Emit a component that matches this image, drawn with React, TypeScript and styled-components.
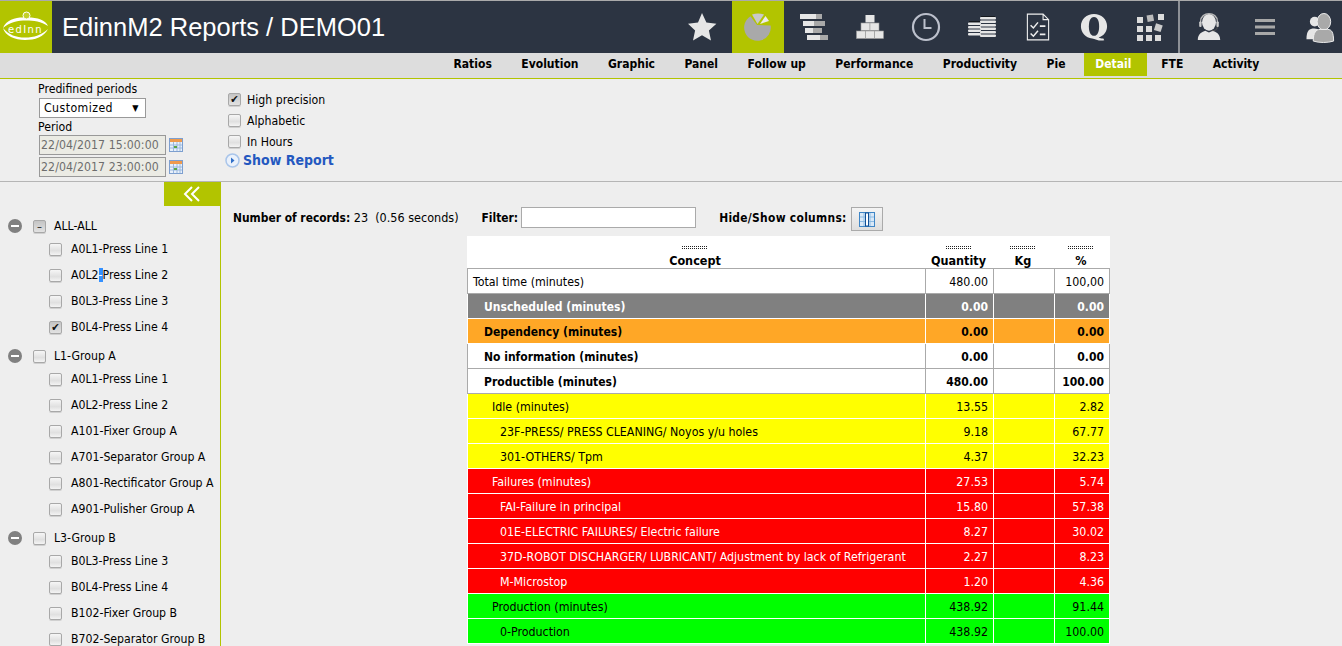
import React from 'react'
import styled, { createGlobalStyle } from 'styled-components'

const GlobalStyle = createGlobalStyle`
  html, body {
    margin: 0;
    padding: 0;
    height: 646px;
    overflow: hidden;
    background: #eeeeee;
    font-family: 'DejaVu Sans Condensed', 'DejaVu Sans', sans-serif;
    font-size: 12.2px;
    color: #000;
  }
  * { box-sizing: border-box; }
`

const Page = styled.div`
  width: 1342px;
  height: 646px;
  overflow: hidden;
  display: flex;
  flex-direction: column;
`

/* header */
const Header = styled.div`
  height: 53px;
  flex: none;
  display: flex;
  align-items: stretch;
  background: #2c3442;
  border-top: 1px solid #aaaaaa;
`
const Logo = styled.div`
  width: 52px;
  background: #b2c400;
  display: flex;
  align-items: center;
  justify-content: center;
`
const Title = styled.h1`
  flex: 1;
  margin: 0;
  padding: 0 0 0 10px;
  align-self: center;
  font-family: 'Liberation Sans', Arial, sans-serif;
  font-weight: 400;
  font-size: 25.5px;
  color: #fff;
`
const IconGroup = styled.div`
  display: flex;
  gap: 4px;
  margin-right: 2px;
`
const UserGroup = styled(IconGroup)`
  border-left: 2px solid #8d9096;
  margin-right: -5px;
  padding-left: 3px;
`
const IconButton = styled.div<{ $active?: boolean }>`
  width: 52px;
  display: flex;
  align-items: center;
  justify-content: center;
  background: ${p => (p.$active ? '#b2c400' : 'transparent')};
`

/* tabs */
const TabBar = styled.div`
  height: 26px;
  flex: none;
  display: flex;
  padding-left: 438.75px;
  background: #dddddd;
  border-bottom: 1px solid #b2c400;
`
const Tab = styled.div<{ $active?: boolean }>`
  height: 23px;
  line-height: 23px;
  padding: ${p => (p.$active ? '0 16px 0 11px' : '0 14.75px')};
  margin: ${p => (p.$active ? '0 -1px 0 4px' : '0')};
  font-weight: 700;
  font-size: 12px;
  color: ${p => (p.$active ? '#fff' : '#000')};
  background: ${p => (p.$active ? '#b2c400' : 'transparent')};
`

/* period panel */
const FilterPanel = styled.div`
  height: 103px;
  flex: none;
  display: flex;
  padding: 3px 0 0 38px;
  border-bottom: 1px solid #b5b5b5;
`
const PeriodColumn = styled.div`
  width: 187px;
  display: flex;
  flex-direction: column;
`
const FieldLabel = styled.div`
  height: 15px;
  line-height: 15px;
`
const PeriodSelect = styled.div`
  width: 107px;
  height: 20px;
  margin: 1px 0 2px 1px;
  padding: 0 6px 0 4px;
  display: flex;
  align-items: center;
  justify-content: space-between;
  background: #fff;
  border: 1px solid #999;
  letter-spacing: 0.45px;
`
const SelectArrow = styled.span`
  font-size: 9px;
`
const DateRow = styled.div`
  display: flex;
  align-items: center;
  gap: 3px;
  margin: 0 0 2px 1px;
`
const DateInput = styled.div`
  width: 127px;
  height: 20px;
  line-height: 18px;
  padding-left: 1px;
  background: #ebebe4;
  border: 1px solid #999;
  color: #6d6d6d;
  white-space: nowrap;
  letter-spacing: 0.1px;
`
const OptionColumn = styled.div`
  display: flex;
  flex-direction: column;
  padding-top: 7px;
`
const OptionRow = styled.label`
  height: 21px;
  display: flex;
  align-items: center;
  margin-left: 3px;
  gap: 6px;
`
const ShowReport = styled.div`
  display: flex;
  align-items: center;
  gap: 3px;
  font-weight: 700;
  font-size: 14px;
  color: #2458c0;
`

/* checkboxes */
const Check = styled.span<{ $on?: boolean }>`
  width: 13px;
  height: 13px;
  flex: none;
  display: inline-flex;
  align-items: center;
  justify-content: center;
  border: 1px solid #a8a8a8;
  border-radius: 2px;
  background: ${p =>
    p.$on
      ? 'linear-gradient(#c4c4c4, #e2e2e2)'
      : 'linear-gradient(#f6f6f6, #e0e0e0 60%, #f4f4f4)'};
  box-shadow: 0 1px 0 #d0d0d0;
  color: #111;
  font-size: 11px;
  line-height: 1;
`

/* main */
const Body = styled.div`
  flex: 1;
  min-height: 0;
  display: flex;
`
const Sidebar = styled.aside`
  width: 221px;
  flex: none;
  border-right: 1px solid #b2c400;
  overflow: hidden;
`
const Collapse = styled.div`
  width: 56px;
  height: 24px;
  margin-left: 164px;
  display: flex;
  align-items: center;
  justify-content: center;
  background: #b2c400;
`
const Tree = styled.div`
  padding: 4px 0 0 8px;
`
const TreeLabel = styled.span`
  margin-left: 9px;
  white-space: nowrap;
`
const GroupRow = styled.div`
  height: 20px;
  display: flex;
  align-items: center;
  margin-top: 6px;
  ${TreeLabel} {
    margin-left: 8px;
  }
`
const Collapser = styled.span`
  width: 14px;
  height: 14px;
  margin-right: 11px;
  border-radius: 50%;
  background: #808080;
  display: flex;
  align-items: center;
  justify-content: center;
  &::before {
    content: '';
    width: 8px;
    height: 2px;
    background: #fff;
  }
`
const ChildRow = styled.div`
  height: 26px;
  display: flex;
  align-items: center;
  padding-left: 41px;
`
const Selected = styled.span`
  background: #3390ff;
  color: #fff;
`
const Content = styled.main`
  flex: 1;
  padding: 25px 0 0 12px;
`
const InfoBar = styled.div`
  height: 29px;
  display: flex;
  align-items: flex-start;
`
const InfoText = styled.span<{ $gap?: number; $spacing?: number }>`
  margin-left: ${p => p.$gap ?? 0}px;
  font-size: 12.5px;
  line-height: 22px;
  white-space: pre;
  letter-spacing: ${p => p.$spacing ?? 0}px;
`
const Bold = styled.b`
  font-weight: 700;
  font-size: 11.9px;
`
const FilterInput = styled.div`
  width: 175px;
  height: 21px;
  margin: 0 23px 0 3px;
  background: #fff;
  border: 1px solid #aaa;
`
const ColumnsButton = styled.div`
  width: 32px;
  height: 24px;
  margin-left: 4px;
  display: flex;
  align-items: center;
  justify-content: center;
  border: 1px solid #aaa;
  background: linear-gradient(#f4f4f4, #dedede);
`

/* report table */
const Report = styled.table`
  margin-left: 234px;
  width: 643px;
  table-layout: fixed;
  border-collapse: collapse;
  background: #fff;
`
const HeadCell = styled.th`
  height: 32px;
  padding: 7px 2px 1px 0;
  font-weight: 700;
  font-size: 12.5px;
  line-height: 13px;
  text-align: center;
  vertical-align: bottom;
  &:first-child {
    padding-right: 3px;
  }
`
const Grip = styled.div`
  width: 26px;
  height: 5px;
  margin: 0 auto 4px;
  background:
    repeating-linear-gradient(0deg, #fff 0 1px, transparent 1px 2px),
    repeating-linear-gradient(90deg, #222 0 1px, #fff 1px 2px);
`
const Row = styled.tr<{ $bg: string; $fg: string; $line: string; $bold?: boolean }>`
  height: 25px;
  background: ${p => p.$bg};
  color: ${p => p.$fg};
  font-weight: ${p => (p.$bold ? 700 : 400)};
  font-size: ${p => (p.$bold ? 12 : 12.3)}px;
  td {
    border: 1px solid ${p => p.$line};
  }
`
const Cell = styled.td<{ $indent?: number }>`
  padding: 2px 5px 0 ${p => p.$indent ?? 5}px;
  white-space: nowrap;
  overflow: hidden;
`
const NumCell = styled(Cell)`
  text-align: right;
`

const ic = { bg: '#e6e6e6', mid: '#a9a9a9' }

const StarIcon = () => (
  <svg width="30" height="28" viewBox="0 0 30 28">
    <path d="M15 0l4.400 9.600 10 1.100-7.500 6.700 2.100 10-9-5.100-9 5.100 2.100-10L1 10.700l10-1.100z" fill={ic.bg} />
  </svg>
)
const PieIcon = () => (
  <svg width="30" height="30" viewBox="0 0 30 30">
    <path d="M14 13L27.600 13.500A13.300 13.300 0 1 1 7.500 4.200z" fill={ic.mid} />
    <path d="M14.500 12L9 2.500Q15 .5 21 2.500z" fill="#c9c9c9" />
    <path d="M17 12L22.500 4 26 9z" fill="#ececec" />
  </svg>
)
const RowsIcon = () => (
  <svg width="28" height="26" viewBox="0 0 28 26">
    <rect x="0" y="0" width="16" height="5" fill={ic.bg} />
    <rect x="16" y="0" width="6" height="5" fill={ic.mid} />
    <rect x="3" y="7" width="11" height="5" fill={ic.bg} />
    <rect x="14" y="7" width="11" height="5" fill={ic.mid} />
    <rect x="5" y="14" width="8" height="5" fill={ic.bg} />
    <rect x="13" y="14" width="9" height="5" fill={ic.mid} />
    <rect x="7" y="21" width="13" height="5" fill={ic.bg} />
    <rect x="20" y="21" width="8" height="5" fill={ic.mid} />
  </svg>
)
const BricksIcon = () => (
  <svg width="28" height="24" viewBox="0 0 28 24" fill={ic.bg}>
    <rect x="9.500" y="0" width="9" height="7.500" />
    <g stroke="#9a9a9a" strokeWidth="0.600">
      <rect x="5" y="8" width="9" height="7.500" />
      <rect x="14" y="8" width="9" height="7.500" />
      <rect x="0.500" y="16" width="9" height="7.500" />
      <rect x="9.500" y="16" width="9" height="7.500" />
      <rect x="18.500" y="16" width="9" height="7.500" />
    </g>
  </svg>
)
const ClockIcon = () => (
  <svg width="30" height="30" viewBox="0 0 30 30" fill="none" stroke="#bcc0cc">
    <circle cx="15" cy="15" r="13" strokeWidth="2.200" />
    <path d="M13.500 7v9h7" strokeWidth="2" />
  </svg>
)
const CoinsIcon = () => {
  const left = [6.500, 10, 13.500, 17]
  const right = [1, 4.500, 8, 11.500, 15, 18.500]
  return (
    <svg width="28" height="22" viewBox="0 0 28 22" fill={ic.bg}>
      <rect x="1" y="5" width="11" height="1.500" fill="#14181d" />
      {left.map(y => (
        <rect key={y} x="0" y={y} width="13" height="2.500" rx="1" />
      ))}
      <rect x="13" y="0" width="14" height="1.500" fill="#14181d" />
      {right.map(y => (
        <rect key={y} x="12" y={y} width="16" height="2.500" rx="1" />
      ))}
    </svg>
  )
}
const ChecklistIcon = () => (
  <svg width="24" height="28" viewBox="0 0 26 30" fill="none" stroke="#eee" strokeWidth="1.200">
    <path d="M1.500 1h17l6 6v22h-23zM18.500 1v6h6" />
    <path d="M5 13l3 3 5-6M5 22l3 3 5-6" strokeWidth="1.600" />
    <path d="M15 14h6M15 23h6" strokeWidth="1.800" />
  </svg>
)
const QIcon = () => (
  <svg width="28" height="28" viewBox="0 0 30 32" preserveAspectRatio="none">
    <path d="M15 1C7 1 1 7 1 15c0 7.500 5 13 12 14 3 .300 6 2.500 10 2.500 1 0 2-.200 3-.500l-1-2c-1 .200-3 0-5-1 5.500-2 9-7 9-13C29 7 23 1 15 1z" fill={ic.bg} />
    <path d="M15 4.500c-4 0-5.500 5-5.500 10.500 0 6 1.500 11 5.500 11s5.500-5 5.500-11c0-5.500-1.500-10.500-5.500-10.500z" fill="#2c3442" />
  </svg>
)
const GridIcon = () => (
  <svg width="27" height="27" viewBox="0 0 27 27" fill="#dcdcdc">
    {[
      [0, 3], [21, 0], [0, 12], [9, 12], [0, 21], [9, 21], [18, 21],
    ].map(([x, y]) => (
      <rect key={`${x}-${y}`} x={x} y={y} width="6" height="6" />
    ))}
    <rect x="10" y="1" width="6.500" height="6.500" transform="rotate(-10 13 4)" fill="#bbb" />
    <rect x="18" y="10" width="7" height="7" transform="rotate(18 21 13)" fill="#ccc" />
  </svg>
)
const AgentIcon = () => (
  <svg width="26" height="28" viewBox="0 0 26 30">
    <path d="M1 29c0-7 5-9 8-10l4 2 4-2c3 1 8 3 8 10z" fill={ic.bg} />
    <ellipse cx="13" cy="10" rx="7.500" ry="9" fill={ic.bg} />
    <path d="M4 12V9c0-11 18-11 18 0v3" fill="none" stroke="#bbb" strokeWidth="1.400" />
    <rect x="2.500" y="9" width="2.500" height="6" rx="1" fill="#ccc" />
    <rect x="21" y="9" width="2.500" height="6" rx="1" fill="#ccc" />
    <path d="M22 15c0 3-3 4-6 4" fill="none" stroke="#555" />
  </svg>
)
const MenuIcon = () => (
  <svg width="20" height="16" viewBox="0 0 20 16" fill="#a8a8a8">
    <rect width="20" height="3" y="0" />
    <rect width="20" height="3" y="6.500" />
    <rect width="20" height="3" y="13" />
  </svg>
)
const UsersIcon = () => (
  <svg width="30" height="31" viewBox="0 0 30 32">
    <circle cx="8.500" cy="10" r="5" fill={ic.bg} />
    <path d="M0 28c0-9 3-11 8-11s7 3 7 11z" fill={ic.bg} />
    <ellipse cx="18" cy="10" rx="7" ry="8.500" fill={ic.mid} stroke="#eee" />
    <path d="M7 30c0-9 3-12 7-12h8c4 0 6 3 6 12-6 2-15 2-21 0z" fill={ic.mid} stroke="#eee" />
  </svg>
)
const EdinnLogo = () => (
  <svg width="50" height="32" viewBox="0 0 50 32">
    <path d="M2 17C5 9 14 6.500 22 6.500h5C36 6.500 45 9 47 15 40 10.500 33 9.500 25 9.500S9 11 2 17z" fill="#fff" />
    <path d="M2 17c2 8 12 12 22 12s19-3 23-11c-6 6-14 8.500-23 8.500S8 24 2 17z" fill="#fff" />
    <circle cx="25.500" cy="4.500" r="3.500" fill="#c3d02a" stroke="#fff" />
    <text x="24.500" y="21.500" textAnchor="middle" fontFamily="'DejaVu Sans', sans-serif" fontSize="10" letterSpacing="1.400" fill="#fff">edInn</text>
  </svg>
)
const CalendarIcon = () => (
  <svg width="14" height="14" viewBox="0 0 14 14">
    <rect x="0.500" y="0.500" width="13" height="13" fill="#e8f0fa" stroke="#7d9fcf" />
    <rect x="1" y="1" width="12" height="3" fill="#ee9a4d" />
    <path d="M1 7h12M1 10h12M4.500 4v9M8 4v9M11 4v9" stroke="#9ab8de" />
    <rect x="5" y="8" width="3" height="2" fill="#5aa646" />
  </svg>
)
const PlayIcon = () => (
  <svg width="15" height="15" viewBox="0 0 15 15">
    <circle cx="7.500" cy="7.500" r="6.500" fill="#eaf1fb" stroke="#a9c5ea" strokeWidth="1.500" />
    <path d="M6 4.500l3.500 3-3.500 3z" fill="#2f6fc8" />
  </svg>
)
const ColumnsIcon = () => (
  <svg width="16" height="15" viewBox="0 0 16 15">
    <rect x="0.500" y="0.500" width="15" height="14" fill="#d9e8f7" stroke="#3f86c6" />
    <path d="M1 5h14M1 9.500h14M5 1v13M11 1v13" stroke="#8dbbe3" />
    <rect x="6.500" y="1" width="3" height="13" fill="#fff" stroke="#114f96" />
  </svg>
)
const DoubleChevron = () => (
  <svg width="18" height="16" viewBox="0 0 18 16" fill="none" stroke="#fff" strokeWidth="2">
    <path d="M9 1L2 8l7 7M16 1L9 8l7 7" />
  </svg>
)

type TreeChild = { label: React.ReactNode; on?: boolean }
const tree: { label: string; on?: boolean; children: TreeChild[] }[] = [
  {
    label: 'ALL-ALL',
    on: true,
    children: [
      { label: 'A0L1-Press Line 1' },
      { label: <>A0L2<Selected>-</Selected>Press Line 2</> },
      { label: 'B0L3-Press Line 3' },
      { label: 'B0L4-Press Line 4', on: true },
    ],
  },
  {
    label: 'L1-Group A',
    children: [
      { label: 'A0L1-Press Line 1' },
      { label: 'A0L2-Press Line 2' },
      { label: 'A101-Fixer Group A' },
      { label: 'A701-Separator Group A' },
      { label: 'A801-Rectificator Group A' },
      { label: 'A901-Pulisher Group A' },
    ],
  },
  {
    label: 'L3-Group B',
    children: [
      { label: 'B0L3-Press Line 3' },
      { label: 'B0L4-Press Line 4' },
      { label: 'B102-Fixer Group B' },
      { label: 'B702-Separator Group B' },
    ],
  },
]

const WHITE = { bg: '#fff', fg: '#000', line: '#aaaaaa' }
const YELLOW = { bg: '#ffff00', fg: '#000', line: '#fff' }
const RED = { bg: '#ff0000', fg: '#fff', line: '#fff' }
const GREEN = { bg: '#00ff00', fg: '#000', line: '#fff' }

const rows = [
  { name: 'Total time (minutes)', qty: '480.00', pct: '100,00', indent: 5, ...WHITE },
  { name: 'Unscheduled (minutes)', qty: '0.00', pct: '0.00', indent: 16, bold: true, bg: '#808080', fg: '#fff', line: '#fff' },
  { name: 'Dependency (minutes)', qty: '0.00', pct: '0.00', indent: 16, bold: true, bg: '#ffa726', fg: '#000', line: '#fff' },
  { name: 'No information (minutes)', qty: '0.00', pct: '0.00', indent: 16, bold: true, ...WHITE },
  { name: 'Productible (minutes)', qty: '480.00', pct: '100.00', indent: 16, bold: true, ...WHITE },
  { name: 'Idle (minutes)', qty: '13.55', pct: '2.82', indent: 24, ...YELLOW },
  { name: '23F-PRESS/ PRESS CLEANING/ Noyos y/u holes', qty: '9.18', pct: '67.77', indent: 32, ...YELLOW },
  { name: '301-OTHERS/ Tpm', qty: '4.37', pct: '32.23', indent: 32, ...YELLOW },
  { name: 'Failures (minutes)', qty: '27.53', pct: '5.74', indent: 24, ...RED },
  { name: 'FAI-Failure in principal', qty: '15.80', pct: '57.38', indent: 32, ...RED },
  { name: '01E-ELECTRIC FAILURES/ Electric failure', qty: '8.27', pct: '30.02', indent: 32, ...RED },
  { name: '37D-ROBOT DISCHARGER/ LUBRICANT/ Adjustment by lack of Refrigerant', qty: '2.27', pct: '8.23', indent: 32, ...RED },
  { name: 'M-Microstop', qty: '1.20', pct: '4.36', indent: 32, ...RED },
  { name: 'Production (minutes)', qty: '438.92', pct: '91.44', indent: 24, ...GREEN },
  { name: '0-Production', qty: '438.92', pct: '100.00', indent: 32, ...GREEN },
]

const tabs = ['Ratios', 'Evolution', 'Graphic', 'Panel', 'Follow up', 'Performance', 'Productivity', 'Pie', 'Detail', 'FTE', 'Activity']

const App = () => {
  return (
    <Page>
      <GlobalStyle />
      <Header>
        <Logo><EdinnLogo /></Logo>
        <Title>EdinnM2 Reports / DEMO01</Title>
        <IconGroup>
          <IconButton><StarIcon /></IconButton>
          <IconButton $active><PieIcon /></IconButton>
          <IconButton><RowsIcon /></IconButton>
          <IconButton><BricksIcon /></IconButton>
          <IconButton><ClockIcon /></IconButton>
          <IconButton><CoinsIcon /></IconButton>
          <IconButton><ChecklistIcon /></IconButton>
          <IconButton><QIcon /></IconButton>
          <IconButton><GridIcon /></IconButton>
        </IconGroup>
        <UserGroup>
          <IconButton><AgentIcon /></IconButton>
          <IconButton><MenuIcon /></IconButton>
          <IconButton><UsersIcon /></IconButton>
        </UserGroup>
      </Header>
      <TabBar>
        {tabs.map(t => (
          <Tab key={t} $active={t === 'Detail'}>{t}</Tab>
        ))}
      </TabBar>
      <FilterPanel>
        <PeriodColumn>
          <FieldLabel>Predifined periods</FieldLabel>
          <PeriodSelect>Customized <SelectArrow>▼</SelectArrow></PeriodSelect>
          <FieldLabel>Period</FieldLabel>
          <DateRow><DateInput>22/04/2017 15:00:00</DateInput><CalendarIcon /></DateRow>
          <DateRow><DateInput>22/04/2017 23:00:00</DateInput><CalendarIcon /></DateRow>
        </PeriodColumn>
        <OptionColumn>
          <OptionRow><Check $on>✔</Check>High precision</OptionRow>
          <OptionRow><Check />Alphabetic</OptionRow>
          <OptionRow><Check />In Hours</OptionRow>
          <ShowReport><PlayIcon />Show Report</ShowReport>
        </OptionColumn>
      </FilterPanel>
      <Body>
        <Sidebar>
          <Collapse><DoubleChevron /></Collapse>
          <Tree>
            {tree.map(group => (
              <div key={group.label}>
                <GroupRow>
                  <Collapser />
                  <Check $on={group.on}>{group.on ? '–' : ''}</Check>
                  <TreeLabel>{group.label}</TreeLabel>
                </GroupRow>
                {group.children.map((c, i) => (
                  <ChildRow key={i}>
                    <Check $on={c.on}>{c.on ? '✔' : ''}</Check>
                    <TreeLabel>{c.label}</TreeLabel>
                  </ChildRow>
                ))}
              </div>
            ))}
          </Tree>
        </Sidebar>
        <Content>
          <InfoBar>
            <InfoText><Bold>Number of records:</Bold> 23  (0.56 seconds)</InfoText>
            <InfoText $gap={23}><Bold>Filter:</Bold></InfoText>
            <FilterInput />
            <InfoText $spacing={0.3}><Bold>Hide/Show columns:</Bold></InfoText>
            <ColumnsButton><ColumnsIcon /></ColumnsButton>
          </InfoBar>
          <Report>
            <colgroup>
              <col />
              <col width="68" />
              <col width="61" />
              <col width="55" />
            </colgroup>
            <thead>
              <tr>
                {['Concept', 'Quantity', 'Kg', '%'].map(h => (
                  <HeadCell key={h}><Grip />{h}</HeadCell>
                ))}
              </tr>
            </thead>
            <tbody>
              {rows.map(r => (
                <Row key={r.name} $bg={r.bg} $fg={r.fg} $line={r.line} $bold={r.bold}>
                  <Cell $indent={r.indent}>{r.name}</Cell>
                  <NumCell>{r.qty}</NumCell>
                  <NumCell />
                  <NumCell>{r.pct}</NumCell>
                </Row>
              ))}
            </tbody>
          </Report>
        </Content>
      </Body>
    </Page>
  )
}

export default App
